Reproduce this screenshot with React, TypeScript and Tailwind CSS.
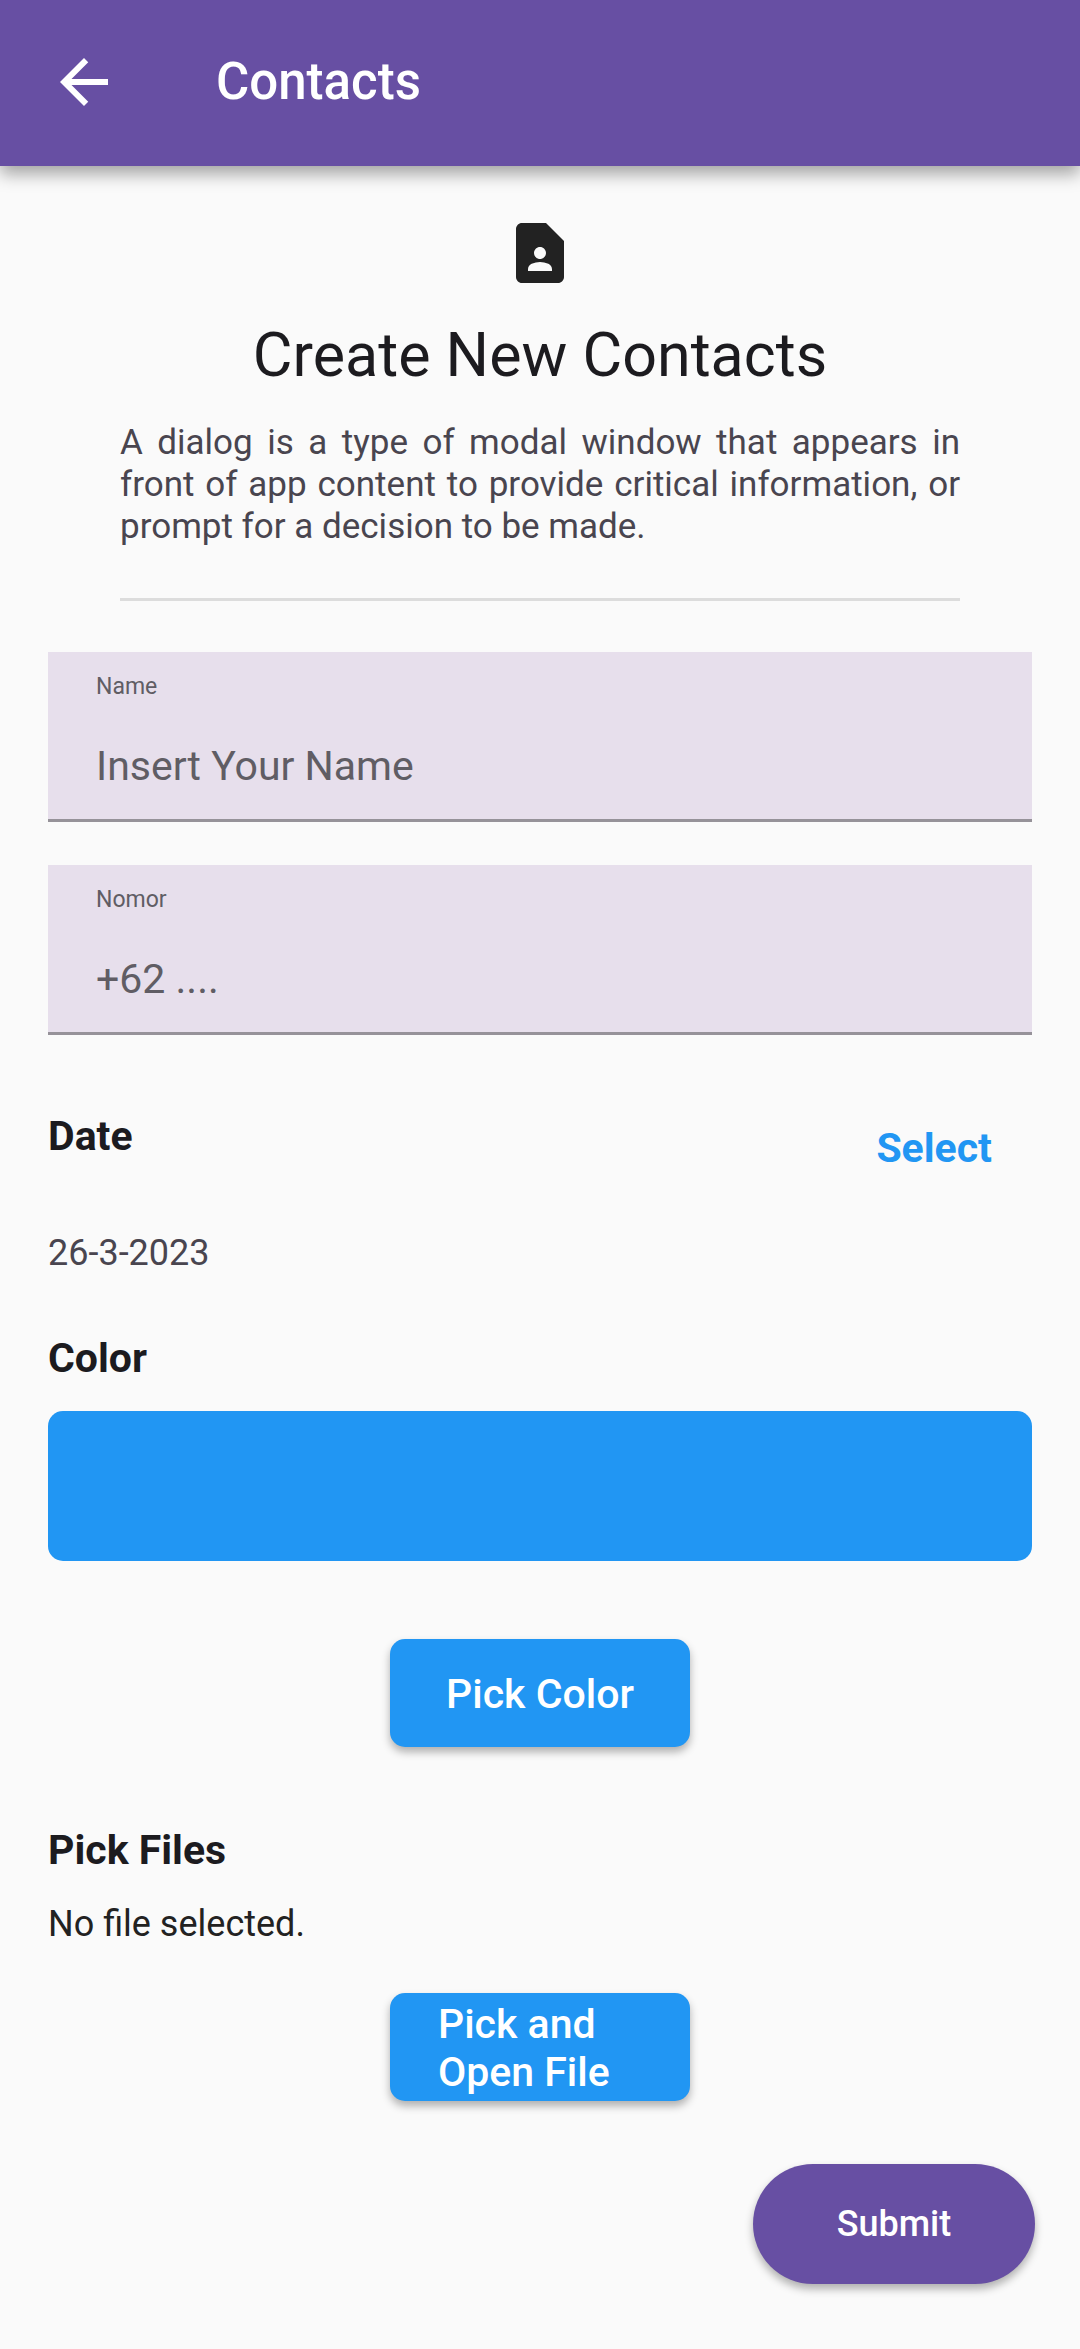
import React from "react";

function Field({ id, label, placeholder, type }: { id: string; label: string; placeholder: string; type: string }) {
  return (
    <div className="flex h-[170px] flex-col border-b-3 border-[#969299] bg-[#e7dfec] px-12">
      <label htmlFor={id} className="pt-[21px] text-[23px] leading-7 text-[#605d64]">{label}</label>
      <input id={id} type={type} placeholder={placeholder} className="mt-[41px] h-12 w-full bg-transparent text-[41px] leading-12 text-[#1c1b1f] outline-none placeholder:text-[#605d64]" />
    </div>
  );
}

export default function App() {
  return (
    <div className="min-h-screen bg-[#fafafa] pb-16 font-[Roboto,sans-serif] text-[#1c1b1f]">
      <header className="flex h-[166px] items-center bg-[#674fa3] px-12 pb-0.5 text-white shadow-[0_8px_16px_rgba(0,0,0,0.35)]">
        <button type="button" aria-label="Back" className="flex size-18 items-center justify-center">
          <svg viewBox="0 0 24 24" className="size-18" fill="currentColor"><path d="M20 11H7.83l5.59-5.59L12 4l-8 8 8 8 1.41-1.41L7.83 13H20v-2z" /></svg>
        </button>
        <h1 className="ml-24 text-[51px] leading-16 font-medium">Contacts</h1>
      </header>
      <main className="px-12">
        <section className="px-18 pt-[51px]">
          <svg viewBox="0 0 24 24" className="mx-auto size-18" fill="#222222"><path fillRule="evenodd" d="M14 2H6c-1.100 0-2 .9-2 2v16c0 1.100.9 2 2 2h12c1.100 0 2-.9 2-2V8l-6-6zm-2 8c1.100 0 2 .9 2 2s-.9 2-2 2-2-.9-2-2 .9-2 2-2zm4 8H8v-.57c0-.81.48-1.530 1.220-1.850a6.950 6.950 0 0 1 5.560 0c.74.32 1.220 1.040 1.220 1.850V18z" /></svg>
          <h2 className="mt-6 text-center text-[61px] leading-[84px]">Create New Contacts</h2>
          <p className="mt-[25px] text-justify text-[35px] leading-[42px] text-[#49454f]">A dialog is a type of modal window that appears in front of app content to provide critical information, or prompt for a decision to be made.</p>
          <hr className="mt-[50px] border-t-3 border-[#dcdcdc]" />
        </section>
        <form className="mt-[51px]" onSubmit={(e) => e.preventDefault()}>
          <div className="flex flex-col gap-[43px]">
            <Field id="name" label="Name" placeholder="Insert Your Name" type="text" />
            <Field id="nomor" label="Nomor" placeholder="+62 ...." type="tel" />
          </div>
          <div className="mt-[77px] flex items-start justify-between">
            <h3 className="text-[41px] leading-12 font-bold">Date</h3>
            <button type="button" className="mt-3 mr-10 text-[41px] leading-12 font-bold text-[#2196f3]">Select</button>
          </div>
          <p className="mt-[60px] text-[36px] leading-[42px] text-[#49454f]">26-3-2023</p>
          <h3 className="mt-[60px] text-[41px] leading-12 font-bold">Color</h3>
          <div className="mt-[29px] h-[150px] rounded-[15px] bg-[#2196f3]" />
          <button type="button" className="mx-auto mt-[78px] flex h-27 w-[300px] items-center justify-center rounded-[15px] bg-[#2196f3] pt-0.5 text-[41px] leading-12 font-medium text-white shadow-[0_5px_8px_rgba(0,0,0,0.3)]">Pick Color</button>
          <h3 className="mt-[79px] text-[41px] leading-12 font-bold">Pick Files</h3>
          <p className="mt-[29px] text-[36px] leading-[42px] text-[#222222]">No file selected.</p>
          <button type="button" className="mx-auto mt-12 flex h-27 w-[300px] items-center rounded-[15px] bg-[#2196f3] px-12 pt-0.5 text-left text-[41px] leading-12 font-medium text-white shadow-[0_5px_8px_rgba(0,0,0,0.3)]">Pick and Open File</button>
          <button type="submit" className="mt-[63px] -mr-[3px] ml-auto flex h-30 w-[282px] items-center justify-center rounded-full bg-[#674fa3] text-[36px] leading-[42px] font-medium text-white shadow-[0_5px_8px_rgba(0,0,0,0.3)]">Submit</button>
        </form>
      </main>
    </div>
  );
}
